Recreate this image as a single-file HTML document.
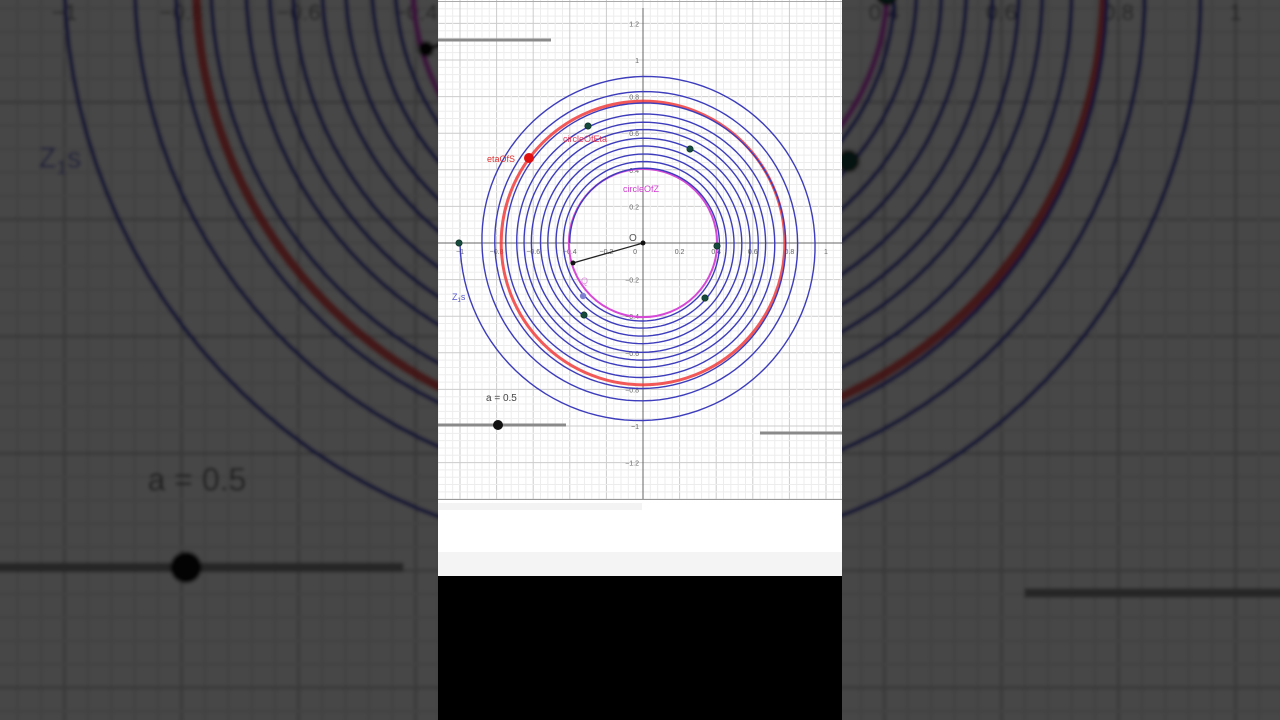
<!DOCTYPE html>
<html><head><meta charset="utf-8">
<style>
html,body{margin:0;padding:0;width:1280px;height:720px;overflow:hidden;background:#000;}
svg{position:absolute;left:0;top:0;overflow:hidden;}
</style></head>
<body>
<svg width="1280" height="720" viewBox="0 0 1280 720" xmlns="http://www.w3.org/2000/svg" font-family="Liberation Sans, sans-serif">
<defs>
<filter id="bl" x="-5%" y="-5%" width="110%" height="110%"><feGaussianBlur stdDeviation="1.8"/></filter>
<clipPath id="cp"><rect x="438" y="0" width="404" height="500"/></clipPath>
<clipPath id="cpa"><rect x="0" y="0" width="1280" height="720"/></clipPath>
<g id="g"></g>
</defs>
<g clip-path="url(#cpa)">
<g filter="url(#bl)">
<use href="#g" transform="matrix(3.2 0 0 3.2 -1407.6 -792.6)"/>
</g>
</g>
<rect x="0" y="0" width="1280" height="720" fill="#000" opacity="0.72"/>
<rect x="438" y="0" width="404" height="576" fill="#fff"/>
<g clip-path="url(#cp)"><use href="#g"/></g>
<line x1="438" y1="499.5" x2="842" y2="499.5" stroke="#999" stroke-width="1"/>
<line x1="438" y1="1.5" x2="842" y2="1.5" stroke="#aaa" stroke-width="1"/>
<rect x="438" y="503" width="204" height="7" fill="#f3f3f3"/>
<rect x="438" y="552" width="404" height="24" fill="#f4f4f4"/>
<rect x="438" y="576" width="404" height="144" fill="#000"/>
</svg>
<script>
(function(){
var ox=643,oy=243,s=183,h='';
h+='<rect x="436" y="0" width="408" height="500" fill="#fff"/>';
for(var i=-40;i<=40;i++){
 var x=ox+i*s*0.04,y=oy+i*s*0.04;
 var major=(i%5===0);
 var c=major?'#cccccc':'#ededed';
 if(x>=436&&x<=844) h+='<line x1="'+x+'" y1="0" x2="'+x+'" y2="500" stroke="'+c+'" stroke-width="1"/>';
 if(y>=0&&y<=500) h+='<line x1="436" y1="'+y+'" x2="844" y2="'+y+'" stroke="'+c+'" stroke-width="1"/>';
}
h+='<line x1="'+ox+'" y1="8" x2="'+ox+'" y2="500" stroke="#666" stroke-width="1"/>';
h+='<line x1="436" y1="'+oy+'" x2="844" y2="'+oy+'" stroke="#666" stroke-width="1"/>';
var lx=[-1,-0.8,-0.6,-0.4,-0.2,0.2,0.4,0.6,0.8,1];
lx.forEach(function(v){var t=(v<0?'\u2212':'')+String(Math.abs(v));h+='<text x="'+(ox+v*s)+'" y="'+(oy+11)+'" font-size="7" fill="#666" text-anchor="middle">'+t+'</text>';});
h+='<text x="'+(ox-6)+'" y="'+(oy+11)+'" font-size="7" fill="#666" text-anchor="end">0</text>';
[-1.2,-1,-0.8,-0.6,-0.4,-0.2,0.2,0.4,0.6,0.8,1,1.2].forEach(function(v){var t=(v<0?'\u2212':'')+String(Math.abs(v));h+='<text x="'+(ox-4)+'" y="'+(oy-v*s+3)+'" font-size="7" fill="#666" text-anchor="end">'+t+'</text>';});
h+='<line x1="436" y1="40" x2="551" y2="40" stroke="#8a8a8a" stroke-width="3"/>';
h+='<line x1="436" y1="425" x2="566" y2="425" stroke="#8a8a8a" stroke-width="3"/>';
h+='<line x1="760" y1="433" x2="844" y2="433" stroke="#8a8a8a" stroke-width="3"/>';
h+='<circle cx="498" cy="425" r="5" fill="#111"/>';
h+='<text x="486" y="401" font-size="10" fill="#444">a = 0.5</text>';
h+='<circle cx="'+ox+'" cy="'+oy+'" r="'+(0.775*s)+'" fill="none" stroke="#f03030" stroke-width="3" opacity="0.8"/>';
h+='<circle cx="'+ox+'" cy="'+oy+'" r="'+(0.405*s)+'" fill="none" stroke="#d648d6" stroke-width="2"/>';
var tab=[1,.88,.81,.75,.69,.65,.61,.56,.52,.475,.435,.40];
var N=tab.length-1,d='',steps=N*120;
for(var k=0;k<=steps;k++){var t=N*k/steps;var j=Math.min(Math.floor(t),N-1);var f=t-j;var r=tab[j]+(tab[j+1]-tab[j])*f;
 var th=Math.PI+2*Math.PI*t;
 var x=ox+s*r*Math.cos(th),y=oy-s*r*Math.sin(th);d+=(k?'L':'M')+x.toFixed(2)+' '+y.toFixed(2);}
h+='<path d="'+d+'" fill="none" stroke="#3c3cbc" stroke-width="1.4"/>';
h+='<line x1="643" y1="243" x2="573" y2="263" stroke="#222" stroke-width="1.3"/>';
h+='<circle cx="643" cy="243" r="2.5" fill="#111"/><circle cx="573" cy="263" r="2.5" fill="#111"/>';
h+='<text x="629" y="241" font-size="10" fill="#555">O</text>';
[[459,243],[588,126],[690,149],[717,246],[705,298],[584,315]].forEach(function(p){h+='<circle cx="'+p[0]+'" cy="'+p[1]+'" r="3.2" fill="#164a3c" stroke="#0a2a20" stroke-width="0.6"/>';});
h+='<circle cx="583" cy="296" r="3.2" fill="#8080d0"/>';
h+='<circle cx="529" cy="158" r="5" fill="#e01010"/>';
h+='<text x="581" y="284" font-size="9" fill="#e090e0">Q</text>';
h+='<text x="487" y="162" font-size="9" fill="#e03030">etaOfS</text>';
h+='<text x="563" y="142" font-size="9" fill="#e04060">circleOfEta</text>';
h+='<text x="623" y="192" font-size="9" fill="#d040d0">circleOfZ</text>';
h+='<text x="452" y="300" font-size="9" fill="#5555cc">Z<tspan font-size="6" dy="2">1</tspan><tspan dy="-2">s</tspan></text>';
document.getElementById('g').innerHTML=h;
})();
</script>
</body></html>
